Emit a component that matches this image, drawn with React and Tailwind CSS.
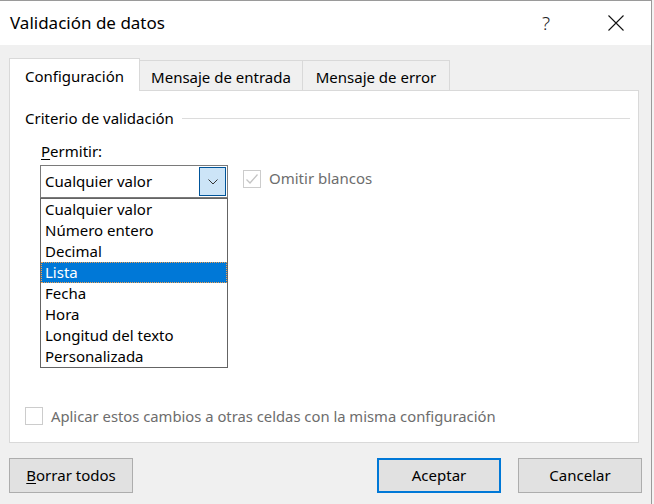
import React from "react";

const font = { fontFamily: '"Noto Sans", "Open Sans", sans-serif' };

const items = [
  "Cualquier valor",
  "Número entero",
  "Decimal",
  "Lista",
  "Fecha",
  "Hora",
  "Longitud del texto",
  "Personalizada",
];

const Check = ({ checked }) => (
  <div className="w-[18px] h-[18px] border border-[#cccccc] bg-white flex items-center justify-center shrink-0">
    {checked && (
      <svg width="14" height="14" viewBox="0 0 14 14" fill="none">
        <path d="M1.5 7.5 L5 11 L12.5 2.5" stroke="#c4c4c4" strokeWidth="1.3" />
      </svg>
    )}
  </div>
);

const Button = ({ children, primary }) => (
  <button
    className={`w-[124px] h-[35px] bg-[#e1e1e1] text-[15px] text-black ${
      primary ? "border-2 border-[#0078d7]" : "border border-[#adadad]"
    }`}
  >
    {children}
  </button>
);

export default function App() {
  return (
    <div className="w-[654px] h-[504px] flex bg-[#f3f3f3] overflow-hidden" style={font}>
      {/* dialog */}
      <div className="w-[652px] h-[504px] border-t border-r border-[#9a9a9a] flex flex-col bg-[#f0f0f0]">
        {/* title bar */}
        <div className="h-[44px] bg-white flex items-center pl-[10px] shrink-0">
          <span className="text-[17px] text-black">Validación de datos</span>
          <span className="ml-auto text-[19px] font-light text-[#222] mr-[58px]">?</span>
          <svg className="mr-[27px]" width="16" height="16" viewBox="0 0 16 16">
            <path d="M0.5 0.5 L15.5 15.5 M15.5 0.5 L0.5 15.5" stroke="#111" strokeWidth="1.1" />
          </svg>
        </div>

        {/* body */}
        <div className="px-[9px] pt-[12px] flex flex-col">
          {/* tabs */}
          <div className="flex items-end h-[33px] text-[15px] text-black whitespace-nowrap">
            <div className="w-[131px] h-[33px] bg-white border border-b-0 border-[#d9d9d9] flex items-center justify-center pt-[3px] relative z-10 -mb-px">
              Configuración
            </div>
            <div className="w-[163px] h-[30px] bg-[#f0f0f0] border-t border-r border-[#d9d9d9] flex items-center justify-center pt-[3px]">
              Mensaje de entrada
            </div>
            <div className="w-[147px] h-[30px] bg-[#f0f0f0] border-t border-r border-[#d9d9d9] flex items-center justify-center pt-[3px]">
              Mensaje de error
            </div>
          </div>

          {/* panel */}
          <div className="w-[630px] h-[353px] bg-white border border-[#d9d9d9] flex flex-col text-[15px] text-black">
            <div className="flex items-center mt-[17px] pl-[15px] pr-[8px] h-[20px]">
              <span>Criterio de validación</span>
              <div className="flex-1 h-px bg-[#dcdcdc] ml-[8px]" />
            </div>
            <div className="pl-[31px] mt-[13px] h-[20px] leading-[20px]">
              <span className="underline underline-offset-2">P</span>ermitir:
            </div>
            <div className="flex items-start pl-[30px] mt-[4px]">
              <div className="relative">
                <div className="w-[188px] h-[33px] border border-[#7a7a7a] bg-white flex items-center pl-[4px]">
                  <span>Cualquier valor</span>
                  <div className="ml-auto mr-px w-[27px] h-[29px] border border-[#005499] bg-[#cce4f7] flex items-center justify-center">
                    <svg width="10" height="6" viewBox="0 0 10 6">
                      <path d="M0.5 0.5 L5 5 L9.5 0.5" stroke="#333" strokeWidth="1" fill="none" />
                    </svg>
                  </div>
                </div>
                {/* open list */}
                <div className="absolute left-0 top-[33px] w-[188px] border border-[#646464] bg-white z-20">
                  {items.map((it) => (
                    <div
                      key={it}
                      className={`h-[21px] leading-[21px] pl-[4px] ${
                        it === "Lista" ? "bg-[#0078d7] text-white outline-1 outline-dotted outline-[#f0a050] -outline-offset-1" : ""
                      }`}
                    >
                      {it}
                    </div>
                  ))}
                </div>
              </div>
              <div className="flex items-center ml-[15px] mt-[3px]">
                <Check checked />
                <span className="ml-[8px] text-[#6d6d6d] -mt-[1px]">Omitir blancos</span>
              </div>
            </div>
            <div className="flex items-center pl-[15px] mt-[207px]">
              <Check />
              <span className="ml-[8px] text-[#6d6d6d] text-[14.8px]">Aplicar estos cambios a otras celdas con la misma configuración</span>
            </div>
          </div>

          {/* buttons */}
          <div className="flex mt-[15px]">
            <Button>
              <span className="underline underline-offset-2">B</span>orrar todos
            </Button>
            <div className="ml-auto flex gap-[17px]">
              <Button primary>Aceptar</Button>
              <Button>Cancelar</Button>
            </div>
          </div>
        </div>
      </div>
    </div>
  );
}
